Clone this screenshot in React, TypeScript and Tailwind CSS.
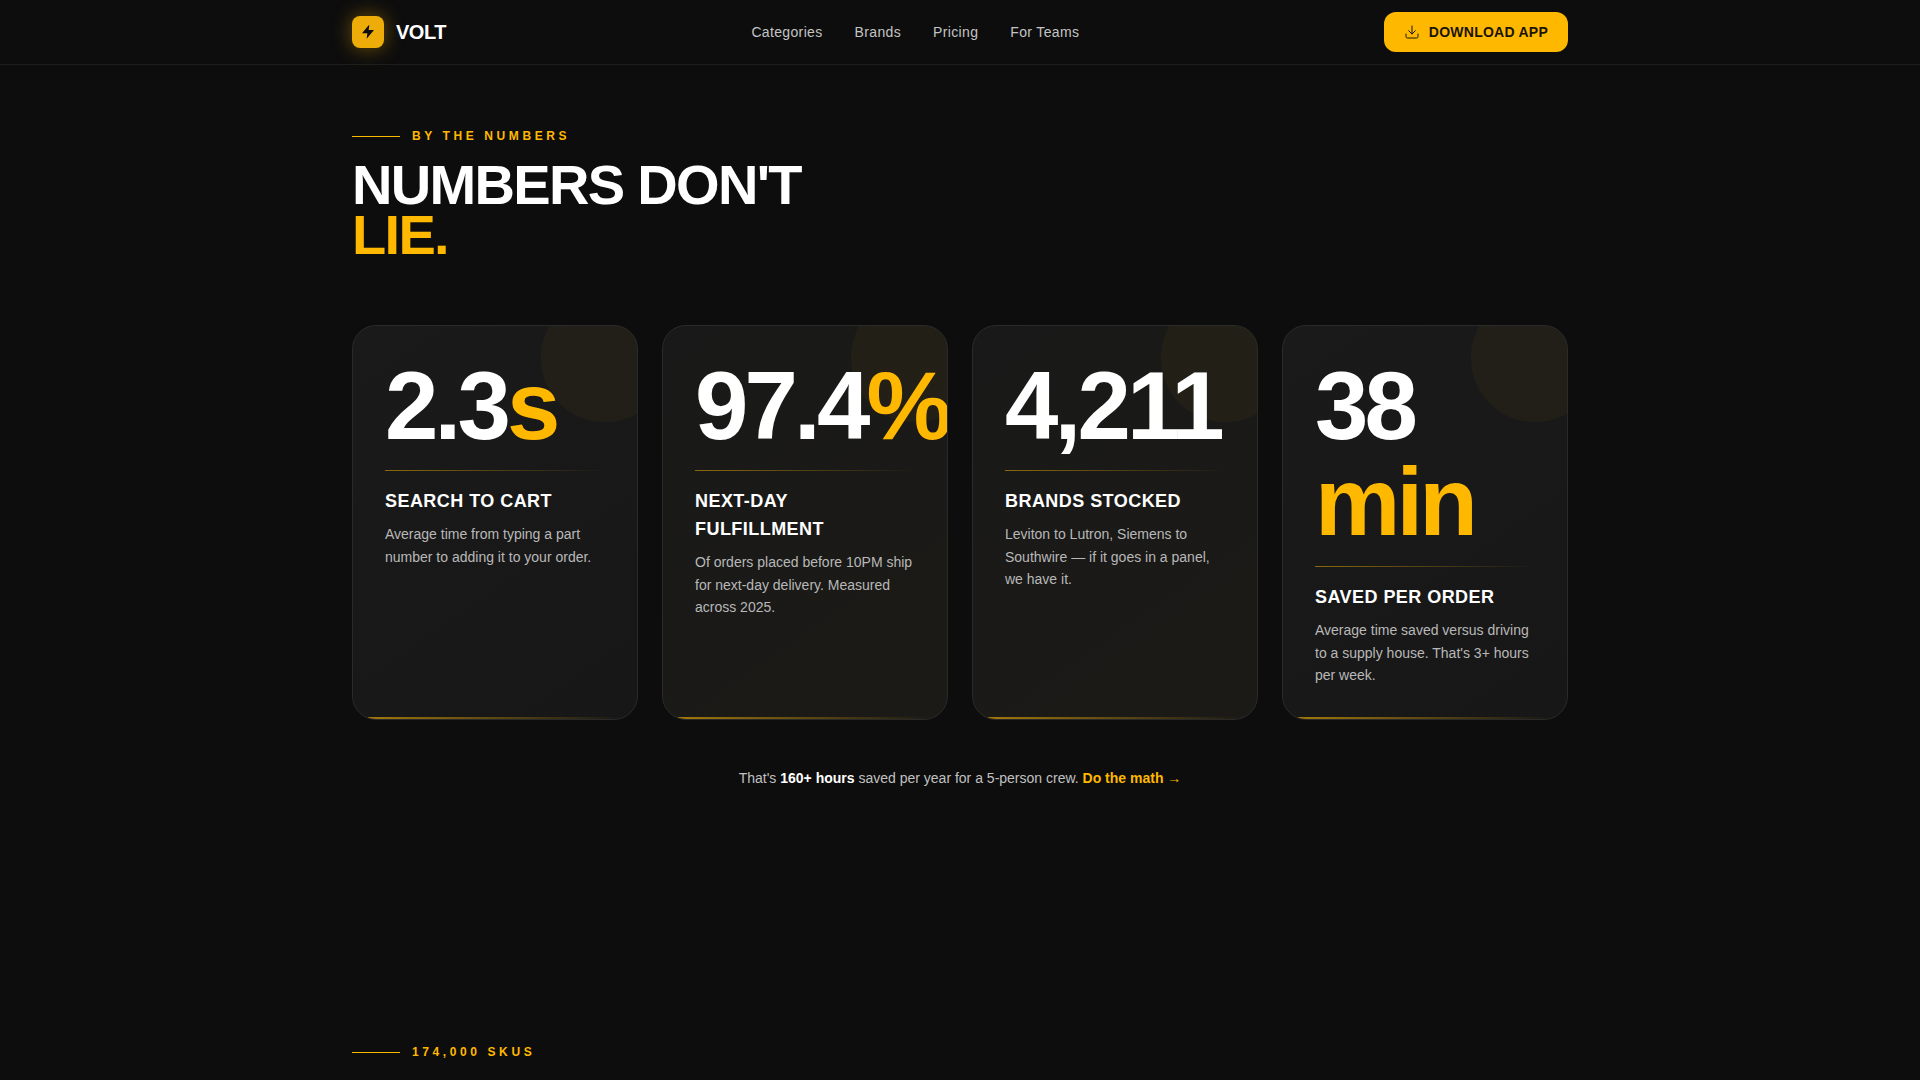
import { Download } from "lucide-react";

const cards = [
  { n: "2.3", u: "s", t: "SEARCH TO CART", d: "Average time from typing a part number to adding it to your order.", bg: "bg-[linear-gradient(145deg,#1a1a1a,#171717)]" },
  { n: "97.4", u: "%", t: "NEXT-DAY FULFILLMENT", d: "Of orders placed before 10PM ship for next-day delivery. Measured across 2025.", bg: "bg-[linear-gradient(145deg,#191919,#1b1a16)]" },
  { n: "4,211", u: "", t: "BRANDS STOCKED", d: "Leviton to Lutron, Siemens to Southwire — if it goes in a panel, we have it.", bg: "bg-[linear-gradient(145deg,#191919,#1b1a16)]" },
  { n: "38 ", u: "min", t: "SAVED PER ORDER", d: "Average time saved versus driving to a supply house. That's 3+ hours per week.", bg: "bg-[linear-gradient(145deg,#1a1a1a,#171717)]" },
];

function Eyebrow({ text }: { text: string }) {
  return (
    <div className="flex items-center gap-3">
      <span className="block h-px w-12 bg-[#FFB800]" />
      <span className="text-xs font-bold tracking-[0.3em] text-[#FFB800]">{text}</span>
    </div>
  );
}

export default function App() {
  return (
    <div className="h-[1080px] overflow-hidden bg-[#0d0d0d] font-['Liberation_Sans',Arial,sans-serif] text-white">
      <nav className="h-[65px] border-b border-[#1e1e1e]">
        <div className="mx-auto flex h-16 w-[1216px] items-center justify-between">
          <div className="flex items-center gap-3">
            <div className="flex h-8 w-8 items-center justify-center rounded-lg bg-[#EDAC08] shadow-[0_0_20px_rgba(255,184,0,0.4)]">
              <svg width="16" height="16" viewBox="0 0 24 24" fill="#0d0d0d">
                <path d="M13 2 3 14h8l-1 8 11-13h-8l1-7z" />
              </svg>
            </div>
            <span className="text-xl font-bold tracking-tight">VOLT</span>
          </div>
          <div className="ml-px flex items-center gap-8 text-sm tracking-wide text-[#c4c4c4]">
            <span>Categories</span>
            <span>Brands</span>
            <span>Pricing</span>
            <span>For Teams</span>
          </div>
          <button className="flex h-10 items-center gap-[9px] rounded-xl bg-[#FFB800] px-5 text-sm font-bold tracking-[0.25px] text-[#1a1408]">
            <Download size={16} strokeWidth={1.5} />
            DOWNLOAD APP
          </button>
        </div>
      </nav>
      <main className="mx-auto w-[1216px] pt-[63px]">
        <Eyebrow text="BY THE NUMBERS" />
        <h1 className="mt-4 text-[56px] font-black leading-[0.9] tracking-[-0.03em]">
          NUMBERS DON'T
          <br />
          <span className="text-[#FFB800]">LIE.</span>
        </h1>
        <div className="mt-16 grid grid-cols-4 gap-6">
          {cards.map((c) => (
            <div key={c.t} className={`relative overflow-hidden rounded-3xl border border-[#2a2a2a] p-8 ${c.bg}`}>
              <div className="absolute -right-8 -top-8 h-32 w-32 rounded-full bg-[#FFB800]/[0.04]" />
              <div className="relative text-[96px] font-black leading-none tracking-[-0.04em]">
                {c.n}
                {c.u && <span className="text-[#FFB800]">{c.u}</span>}
              </div>
              <div className="relative mt-4 h-px w-[220px] bg-gradient-to-r from-[#FFB800]/50 to-transparent" />
              <h3 className="relative mt-4 text-lg font-bold leading-7 tracking-wide">{c.t}</h3>
              <p className="relative mt-2 text-sm leading-[1.625] text-[#b8b8b8]">{c.d}</p>
              <div className="absolute bottom-0 left-[15px] right-[15px] h-0.5 bg-gradient-to-r from-[#FFB800]/60 to-transparent" />
            </div>
          ))}
        </div>
        <p className="mt-12 text-center text-sm text-[#c0c0c0]">
          That's <b className="text-white">160+ hours</b> saved per year for a 5-person crew.{" "}
          <span className="font-bold text-[#FFB800]">Do the math</span>{" "}
          <span className="text-[#FFB800]">→</span>
        </p>
        <div className="mt-[256px]">
          <Eyebrow text="174,000 SKUS" />
        </div>
      </main>
    </div>
  );
}
